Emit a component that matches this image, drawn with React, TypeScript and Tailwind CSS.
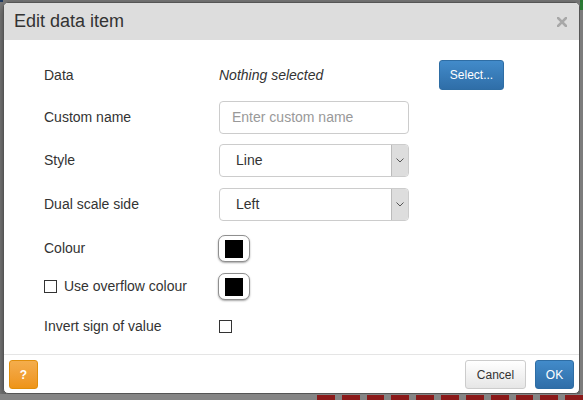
import React from "react";

const FONT = { fontFamily: '"Liberation Sans", Arial, sans-serif' };

function Swatch() {
  return (
    <button
      type="button"
      className="flex h-[27px] w-[32px] items-center justify-center rounded-[7px] border border-[#8f8f8f] bg-white shadow-[0_1px_2px_rgba(0,0,0,0.35)]"
    >
      <span className="block h-[18px] w-[18px] bg-black" />
    </button>
  );
}

function Checkbox() {
  return <span className="block h-[13px] w-[13px] border border-[#333] bg-white" />;
}

function SelectBox({ value }: { value: string }) {
  return (
    <div className="flex h-[33px] w-[190px] overflow-hidden rounded-[4px] border border-[#cccccc] bg-white">
      <div className="flex flex-1 items-center pl-[16px] text-[14px] text-[#333]">{value}</div>
      <div className="flex w-[17px] items-center justify-center border-l border-[#bbb] bg-[#dddddd]">
        <svg width="8" height="5" viewBox="0 0 8 5">
          <path d="M0.5 0.5 L4 4 L7.5 0.5" fill="none" stroke="#555" strokeWidth="1" />
        </svg>
      </div>
    </div>
  );
}

export default function App() {
  const reds = Array.from({ length: 11 });
  return (
    <div className="flex h-[400px] w-[583px] flex-col overflow-hidden bg-[#808080]" style={FONT}>
      <div className="flex h-[2px] shrink-0">
        <div className="w-[3px] bg-[#1f3b63]" />
        <div className="flex-1 bg-[#7a7a7a]" />
        <div className="w-[3px] bg-[#2c7a35]" />
      </div>
      <div className="flex shrink-0">
        <div className="w-[3px] bg-[#7c7c7c]" />
        <div className="flex h-[392px] w-[577px] flex-col overflow-hidden rounded-[5px] border border-[#555] bg-white shadow-[0_3px_9px_rgba(0,0,0,0.5)]">
          <div className="flex h-[37px] shrink-0 items-center justify-between bg-[#dddddd] pl-[10px] pr-[11px]">
            <span className="text-[18px] text-[#333]">Edit data item</span>
            <svg width="10" height="10" viewBox="0 0 10 10" className="mr-[1px]">
              <path d="M1 1 L9 9 M9 1 L1 9" stroke="#a8a8a8" strokeWidth="2.6" strokeLinecap="square" />
            </svg>
          </div>

          <div className="flex flex-1 flex-col pl-[40px] pt-[20px] text-[14px] text-[#333]">
            <div className="flex h-[30px] items-center">
              <span className="w-[175px]">Data</span>
              <span className="w-[220px] italic">Nothing selected</span>
              <button
                type="button"
                className="h-[30px] w-[65px] rounded-[3px] border border-[#2e6da4] bg-gradient-to-b from-[#428bca] to-[#2f6ea8] text-[12px] text-white"
              >
                Select...
              </button>
            </div>

            <div className="mt-[11px] flex h-[33px] items-center">
              <span className="w-[175px]">Custom name</span>
              <div className="flex h-[33px] w-[190px] items-center rounded-[4px] border border-[#cccccc] pl-[12px] text-[#999]">
                Enter custom name
              </div>
            </div>

            <div className="mt-[10px] flex h-[33px] items-center">
              <span className="w-[175px]">Style</span>
              <SelectBox value="Line" />
            </div>

            <div className="mt-[11px] flex h-[33px] items-center">
              <span className="w-[175px]">Dual scale side</span>
              <SelectBox value="Left" />
            </div>

            <div className="mt-[14px] flex h-[27px] items-center">
              <span className="w-[174px]">Colour</span>
              <Swatch />
            </div>

            <div className="mt-[11px] flex h-[27px] items-center">
              <div className="flex w-[174px] items-center gap-[7px]">
                <Checkbox />
                <span>Use overflow colour</span>
              </div>
              <Swatch />
            </div>

            <div className="mt-[12px] flex h-[28px] items-center">
              <span className="w-[175px]">Invert sign of value</span>
              <Checkbox />
            </div>
          </div>

          <div className="flex h-[39px] shrink-0 items-start justify-between border-t border-[#e5e5e5] px-[5px] pt-[5px]">
            <button
              type="button"
              className="h-[29px] w-[29px] rounded-[3px] border border-[#e08e0b] bg-gradient-to-b from-[#f4ad4c] to-[#ee9416] text-[12px] font-bold text-white"
            >
              ?
            </button>
            <div className="flex gap-[9px]">
              <button
                type="button"
                className="h-[29px] w-[61px] rounded-[3px] border border-[#cccccc] bg-gradient-to-b from-white to-[#e6e6e6] text-[12px] text-[#333]"
              >
                Cancel
              </button>
              <button
                type="button"
                className="h-[29px] w-[39px] rounded-[3px] border border-[#2e6da4] bg-gradient-to-b from-[#428bca] to-[#2f6ea8] text-[12px] text-white"
              >
                OK
              </button>
            </div>
          </div>
        </div>
        <div className="flex w-[3px] flex-col bg-[#7c7c7c]">
          <div className="h-[8px] bg-[#2c7a35]" />
        </div>
      </div>
      <div className="flex flex-1 items-start gap-[7px] bg-[#858585] pl-[317px] pt-[1px]">
        {reds.map((_, i) => (
          <span key={i} className="block h-[6px] w-[18px] bg-[#8b1a1a]" />
        ))}
      </div>
    </div>
  );
}
